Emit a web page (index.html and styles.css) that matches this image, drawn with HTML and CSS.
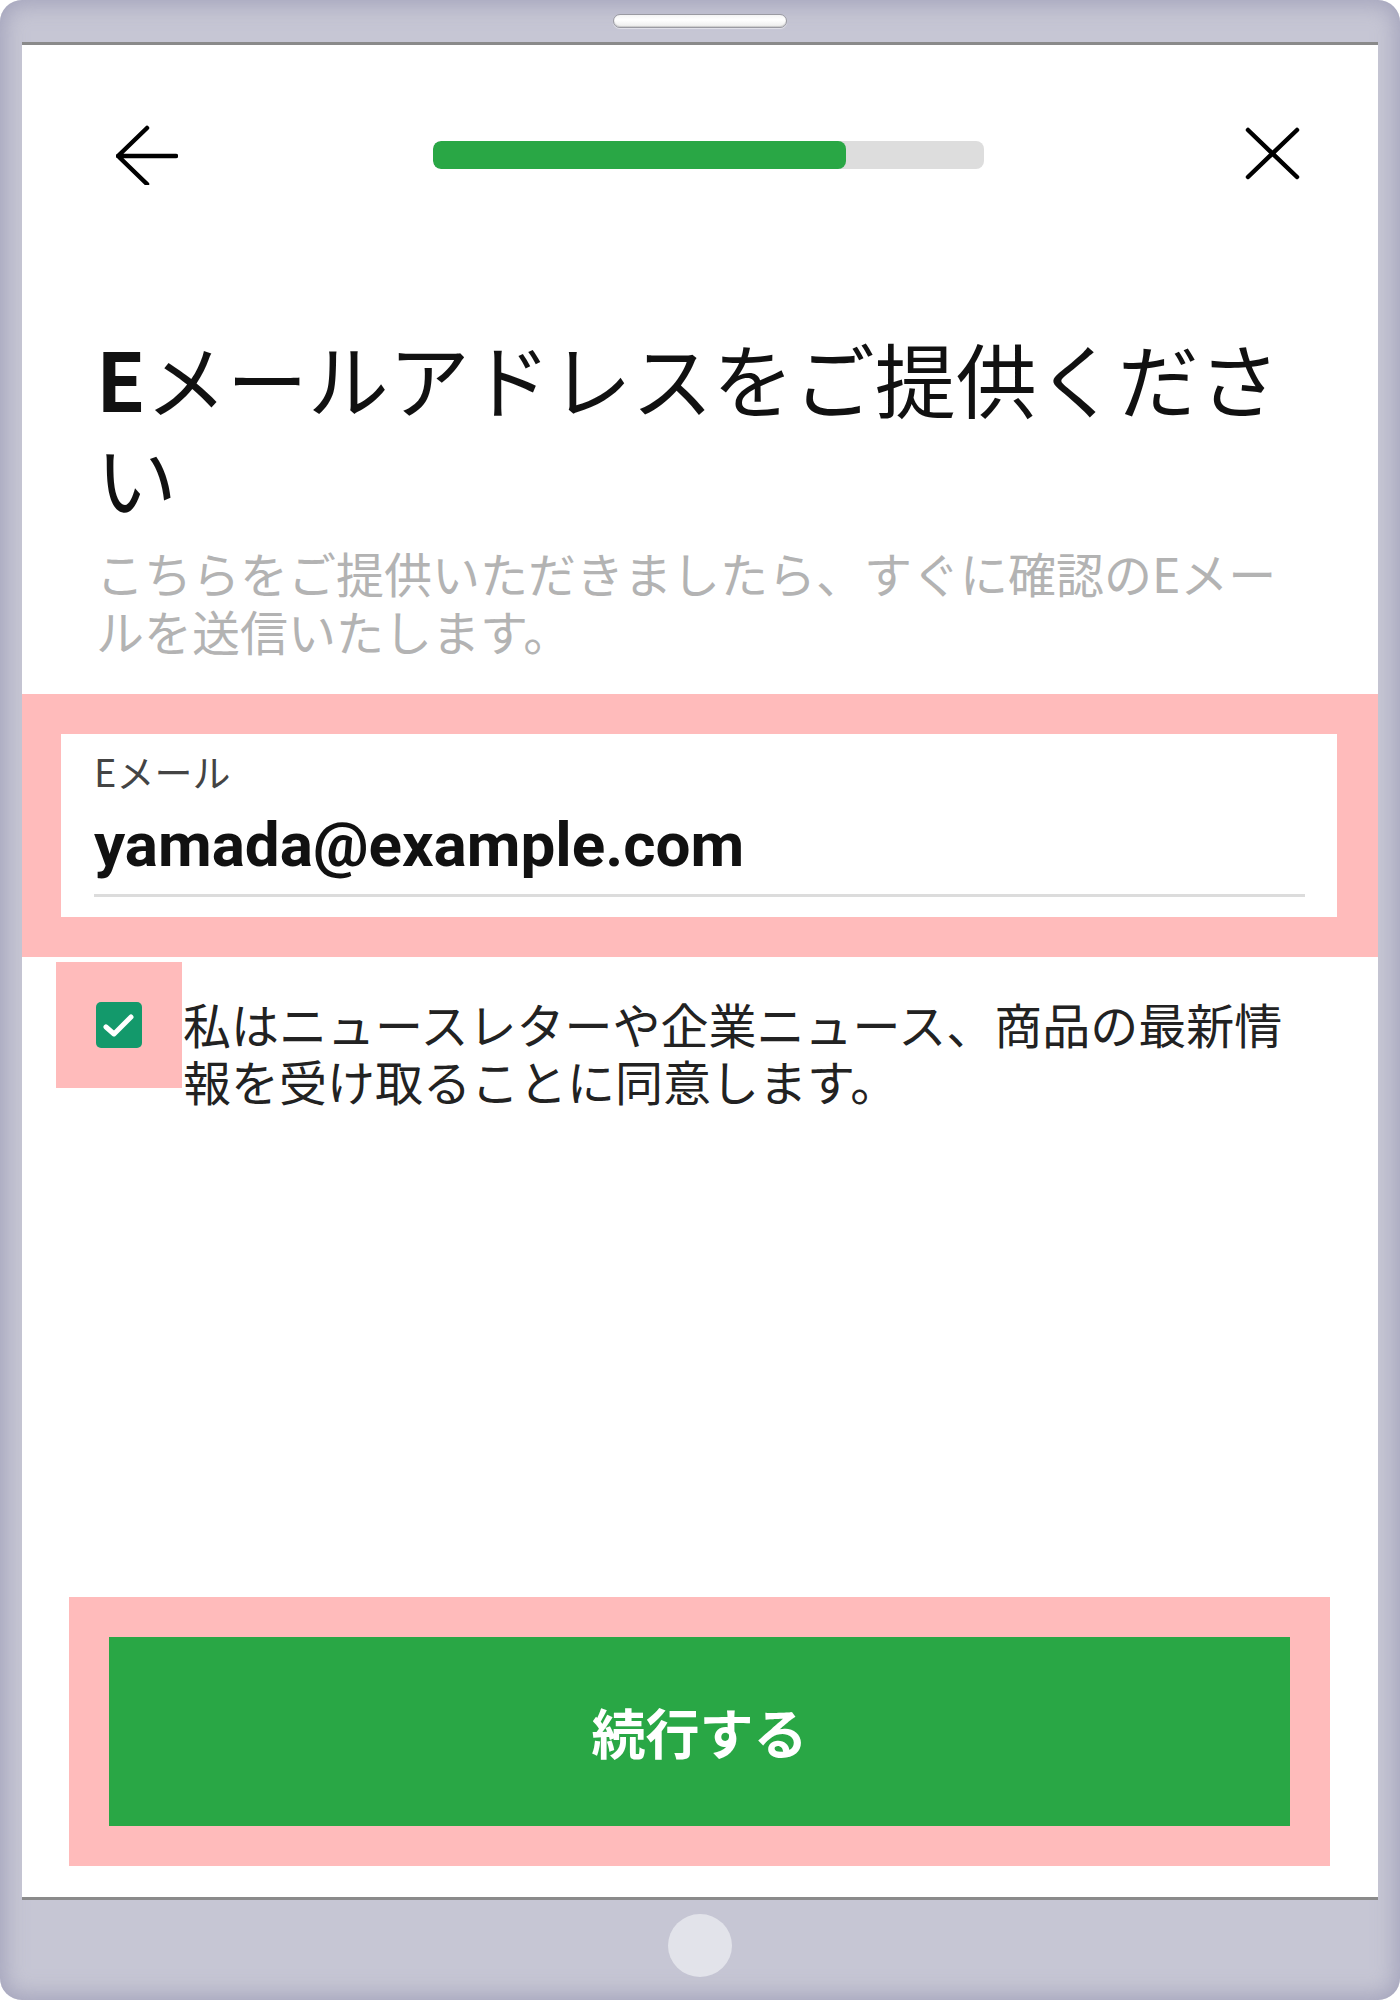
FILE: index.html
```html
<!DOCTYPE html>
<html lang="ja">
<head>
<meta charset="utf-8">
<title>Eメールアドレスをご提供ください</title>
<link rel="stylesheet" href="styles.css">
</head>
<body>
<div class="device">
  <div class="bezel-top"><div class="speaker"></div></div>
  <main class="screen">
    <header class="topbar">
      <span class="icon back" aria-label="戻る">
        <svg width="62" height="60" viewBox="0 0 62 60"><path d="M2 31H60M31 3L2 31L31 59" fill="none" stroke="#000" stroke-width="4.5" stroke-linecap="round" stroke-linejoin="round"/></svg>
      </span>
      <div class="progress"><div class="progress-fill" style="width:75%"></div></div>
      <span class="icon close" aria-label="閉じる">
        <svg width="60" height="60" viewBox="0 0 60 60"><path d="M6 5L55 52M55 5L6 52" fill="none" stroke="#000" stroke-width="4.5" stroke-linecap="round"/></svg>
      </span>
    </header>

    <h1 class="title"><span class="title-e">E</span>メールアドレスをご提供ください</h1>
    <p class="subtitle">こちらをご提供いただきましたら、すぐに確認のEメールを送信いたします。</p>

    <div class="highlight field-hl">
      <div class="field">
        <div class="field-label">Eメール</div>
        <div class="field-value">yamada@example.com</div>
      </div>
    </div>

    <div class="consent">
      <div class="highlight check-hl">
        <span class="checkbox">
          <svg width="46" height="46" viewBox="0 0 46 46"><path d="M10 25L18 32L35 15" fill="none" stroke="#fff" stroke-width="5" stroke-linecap="round" stroke-linejoin="round"/></svg>
        </span>
      </div>
      <p class="consent-text">私はニュースレターや企業ニュース、商品の最新情報を受け取ることに同意します。</p>
    </div>

    <div class="highlight cta-hl">
      <div class="cta">続行する</div>
    </div>
  </main>
  <div class="bezel-bottom"><div class="home"></div></div>
</div>
</body>
</html>
```

FILE: styles.css
```css
html, body {
  margin: 0;
  padding: 0;
  background: #ffffff;
}

body {
  font-family: "Noto Sans CJK JP", "Noto Sans", sans-serif;
  color: #111;
}

.device {
  width: 1400px;
  height: 2000px;
  box-sizing: border-box;
  padding: 0 22px;
  display: flex;
  flex-direction: column;
  background: #c6c6d4;
  border-radius: 22px;
  box-shadow: inset 0 0 22px 4px rgba(150, 150, 178, 0.75);
}

.bezel-top {
  height: 42px;
  display: flex;
  justify-content: center;
}

.speaker {
  margin-top: 14px;
  width: 174px;
  height: 14px;
  box-sizing: border-box;
  border-radius: 7px;
  background: linear-gradient(#f4f4f4, #ffffff 40%, #ececec);
  border: 1px solid #9a9aa2;
  box-shadow: 0 1px 1px rgba(255, 255, 255, 0.5), inset 0 -1px 1px rgba(0, 0, 0, 0.15);
}

.screen {
  height: 1858px;
  box-sizing: border-box;
  background: #ffffff;
  border-top: 3px solid #8a8a8a;
  border-bottom: 3px solid #8a8a8a;
  display: flex;
  flex-direction: column;
}

.bezel-bottom {
  height: 100px;
  display: flex;
  justify-content: center;
}

.home {
  margin-top: 14px;
  width: 64px;
  height: 63px;
  border-radius: 50%;
  background: #e2e3ea;
}

/* top bar */
.topbar {
  display: flex;
  align-items: center;
  height: 60px;
  padding: 80px 0 0 94px;
}

.icon {
  display: flex;
}

.icon svg {
  display: block;
}

.progress {
  margin-left: 255px;
  width: 551px;
  height: 28px;
  border-radius: 8px;
  background: #dddddd;
  overflow: hidden;
}

.progress-fill {
  height: 100%;
  border-radius: 8px;
  background: #29a745;
}

.close {
  margin-left: 258px;
}

/* heading */
.title {
  margin: 142px 74px 0 74px;
  font-size: 81px;
  line-height: 99px;
  font-weight: 400;
  color: #111;
}

.title-e {
  font-weight: 700;
}

.subtitle {
  margin: 19px 74px 0 74px;
  font-size: 48px;
  line-height: 57.6px;
  color: #b3b3b3;
}

/* highlighted areas */
.highlight {
  background: #ffbbbb;
}

.field-hl {
  margin-top: 35px;
  padding: 40px 41px 40px 39px;
}

.field {
  background: #ffffff;
  padding: 14px 32px 20px 33px;
}

.field-label {
  font-size: 38px;
  line-height: 45.6px;
  color: #444;
}

.field-value {
  margin-top: 15px;
  padding-bottom: 13px;
  border-bottom: 3px solid #dcdcdc;
  font-family: "Roboto", "Noto Sans", sans-serif;
  font-weight: 700;
  font-size: 62px;
  line-height: 72px;
  color: #111;
}

/* consent */
.consent {
  display: flex;
  align-items: flex-start;
  margin-top: 5px;
}

.check-hl {
  margin-left: 34px;
  width: 126px;
  height: 126px;
  flex: none;
  display: flex;
  align-items: center;
  justify-content: center;
}

.checkbox {
  width: 46px;
  height: 46px;
  border-radius: 5px;
  background: #13996b;
  display: flex;
}

.consent-text {
  margin: 33px 74px 0 1px;
  font-size: 48px;
  line-height: 57.6px;
  color: #222;
}

/* call to action */
.cta-hl {
  margin: auto 48px 31px 47px;
  padding: 40px;
}

.cta {
  height: 189px;
  background: #29a745;
  color: #ffffff;
  font-size: 54px;
  font-weight: 700;
  display: flex;
  align-items: center;
  justify-content: center;
}
```
